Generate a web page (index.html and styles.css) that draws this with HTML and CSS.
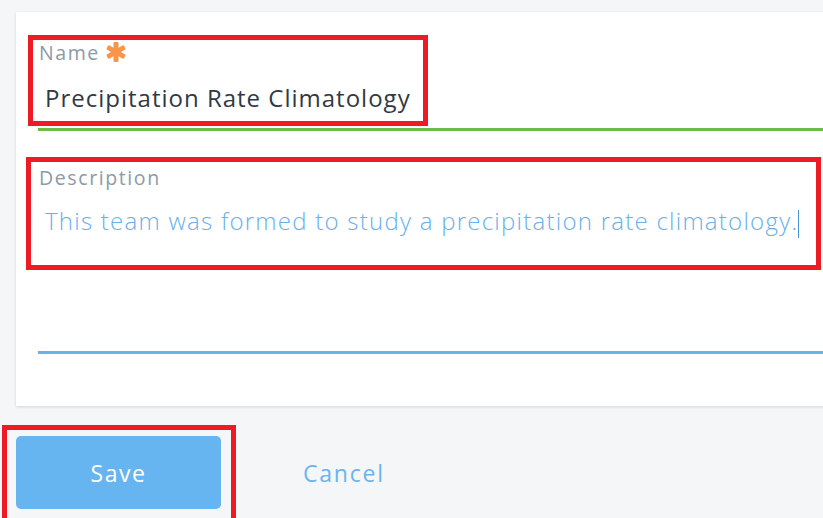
FILE: index.html
```html
<!DOCTYPE html>
<html lang="en">
<head>
<meta charset="utf-8">
<title>Edit team</title>
<link rel="stylesheet" href="styles.css">
</head>
<body>
<div class="page">
  <form class="card">
    <div class="mark mark-name">
      <div class="label">Name
        <svg class="req" width="22" height="22" viewBox="0 0 22 22" aria-label="required">
          <g fill="#f7964a">
            <rect x="8.5" y="1" width="5" height="20" rx="1.2"/>
            <rect x="8.5" y="1" width="5" height="20" rx="1.2" transform="rotate(60 11 11)"/>
            <rect x="8.5" y="1" width="5" height="20" rx="1.2" transform="rotate(-60 11 11)"/>
          </g>
        </svg>
      </div>
      <div class="value">Precipitation Rate Climatology</div>
    </div>
    <div class="line line-green"></div>

    <div class="mark mark-desc">
      <div class="label">Description</div>
      <div class="desc-text">This team was formed to study a precipitation rate climatology.<span class="caret"></span></div>
    </div>
    <div class="line line-blue"></div>
  </form>

  <div class="actions">
    <div class="mark mark-save">
      <button type="button" class="btn-save">Save</button>
    </div>
    <button type="button" class="btn-cancel">Cancel</button>
  </div>
</div>
</body>
</html>
```

FILE: styles.css
```css
* { box-sizing: border-box; }
html, body {
  margin: 0;
  padding: 0;
  background: #f5f6f8;
  font-family: "Open Sans", "Liberation Sans", sans-serif;
  overflow: hidden;
}
.page {
  width: 823px;
  height: 518px;
  padding-top: 12px;
}
.card {
  margin-left: 16px;
  width: 820px;
  background: #ffffff;
  box-shadow: 0 1px 3px rgba(0,0,0,0.14);
  padding: 23px 0 52px 12px;
}
.mark {
  border: 5px solid #ed1c24;
}
.mark-name {
  width: 400px;
  height: 91px;
  padding: 1px 0 0 6px;
}
.label {
  font-size: 19.5px;
  letter-spacing: 1.6px;
  color: #8b9aa7;
  line-height: 24px;
  display: flex;
  align-items: center;
  gap: 5px;
}
.req {
  display: block;
  width: 22px;
  height: 22px;
  margin-top: -2px;
}
.value {
  margin: 18px 0 0 6px;
  font-size: 24px;
  letter-spacing: 1px;
  color: #2f3a44;
  line-height: 30px;
}
.line {
  margin-left: 10px;
  height: 3px;
}
.line-green {
  margin-top: 2px;
  background: #6dba44;
}
.mark-desc {
  margin: 26px 0 0 -2px;
  width: 795px;
  height: 113px;
  padding: 4px 0 0 8px;
}
.desc-text {
  margin: 16px 0 0 6px;
  font-size: 24px;
  font-weight: 300;
  letter-spacing: 1.25px;
  color: #69b0ea;
  line-height: 30px;
  white-space: nowrap;
}
.caret {
  display: inline-block;
  width: 1px;
  height: 28px;
  background: #4a90d9;
  vertical-align: middle;
}
.line-blue {
  margin-top: 81px;
  background: #6ab3e8;
}
.actions {
  margin-top: 19px;
  display: flex;
  align-items: flex-start;
}
.mark-save {
  margin-left: 2px;
  width: 234px;
  height: 100px;
  padding: 6px 0 0 9px;
}
.btn-save {
  width: 205px;
  height: 73px;
  border: none;
  border-radius: 5px;
  background: #66b5f0;
  color: #ffffff;
  font-family: inherit;
  font-size: 23px;
  letter-spacing: 1.5px;
  cursor: pointer;
}
.btn-cancel {
  margin: 11px 0 0 45px;
  height: 73px;
  padding: 0 22px;
  border: none;
  background: transparent;
  color: #6ab4ef;
  font-family: inherit;
  font-size: 23px;
  letter-spacing: 1.8px;
  cursor: pointer;
}
```
